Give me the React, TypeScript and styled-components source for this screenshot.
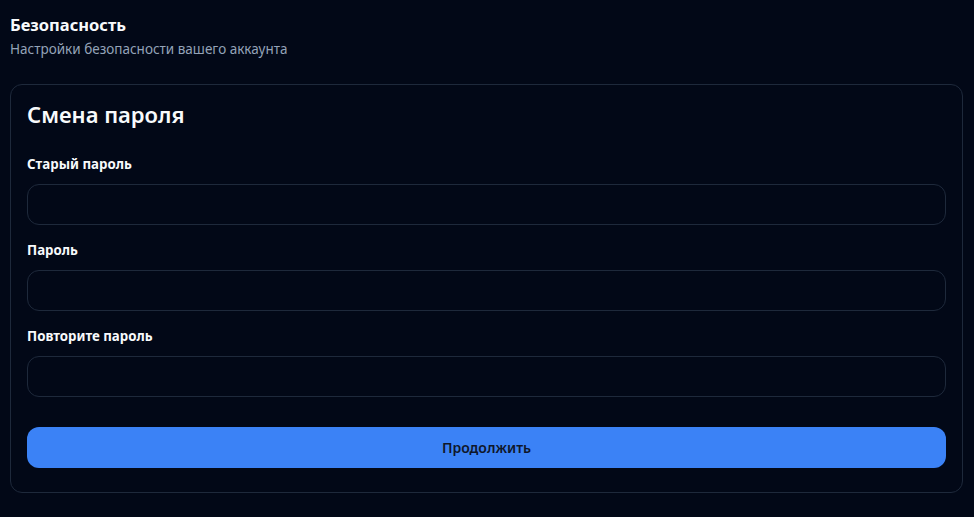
import React from "react";
import styled, { createGlobalStyle } from "styled-components";

const GlobalStyle = createGlobalStyle`
  html, body {
    margin: 0;
    padding: 0;
    background: #020817;
    color: #f8fafc;
    font-family: "Noto Sans", "Open Sans", sans-serif;
  }
  * { box-sizing: border-box; }
`;

const Page = styled.div`
  padding: 13px 11px 10px 10px;
  display: flex;
  flex-direction: column;
  min-height: 517px;
`;

const Header = styled.div`
  display: flex;
  flex-direction: column;
  gap: 2px;
  margin-bottom: 25px;
`;

const Title = styled.h2`
  margin: 0;
  font-size: 16.5px;
  line-height: 24px;
  font-weight: 700;
  color: #f8fafc;
`;

const Subtitle = styled.p`
  margin: 0;
  font-size: 13.5px;
  line-height: 20px;
  color: #94a3b8;
`;

const Card = styled.form`
  border: 1px solid #1e293b;
  border-radius: 12px;
  padding: 13px 16px 24px 16px;
  display: flex;
  flex-direction: column;
`;

const CardTitle = styled.h3`
  margin: 0 0 24px 0;
  font-size: 22px;
  line-height: 32px;
  font-weight: 600;
  color: #f8fafc;
`;

const Field = styled.div`
  display: flex;
  flex-direction: column;
  gap: 10px;
  margin-bottom: 15px;
`;

const Label = styled.label`
  font-size: 13.3px;
  line-height: 20px;
  font-weight: 700;
  color: #f8fafc;
`;

const Input = styled.input`
  height: 41px;
  width: 100%;
  border: 1px solid #1e293b;
  border-radius: 12px;
  background: transparent;
  color: #f8fafc;
  padding: 0 12px;
  font-family: inherit;
  font-size: 14px;
  outline: none;
`;

const Button = styled.button`
  margin-top: 15px;
  height: 41px;
  width: 100%;
  border: none;
  border-radius: 12px;
  background: #3b82f6;
  color: #0f172a;
  font-family: inherit;
  font-size: 14px;
  font-weight: 600;
  cursor: pointer;
`;

const fields = ["Старый пароль", "Пароль", "Повторите пароль"];

export default function App() {
  return (
    <>
      <GlobalStyle />
      <Page>
        <Header>
          <Title>Безопасность</Title>
          <Subtitle>Настройки безопасности вашего аккаунта</Subtitle>
        </Header>
        <Card onSubmit={(e) => e.preventDefault()}>
          <CardTitle>Смена пароля</CardTitle>
          {fields.map((f) => (
            <Field key={f}>
              <Label>{f}</Label>
              <Input type="password" />
            </Field>
          ))}
          <Button type="submit">Продолжить</Button>
        </Card>
      </Page>
    </>
  );
}
